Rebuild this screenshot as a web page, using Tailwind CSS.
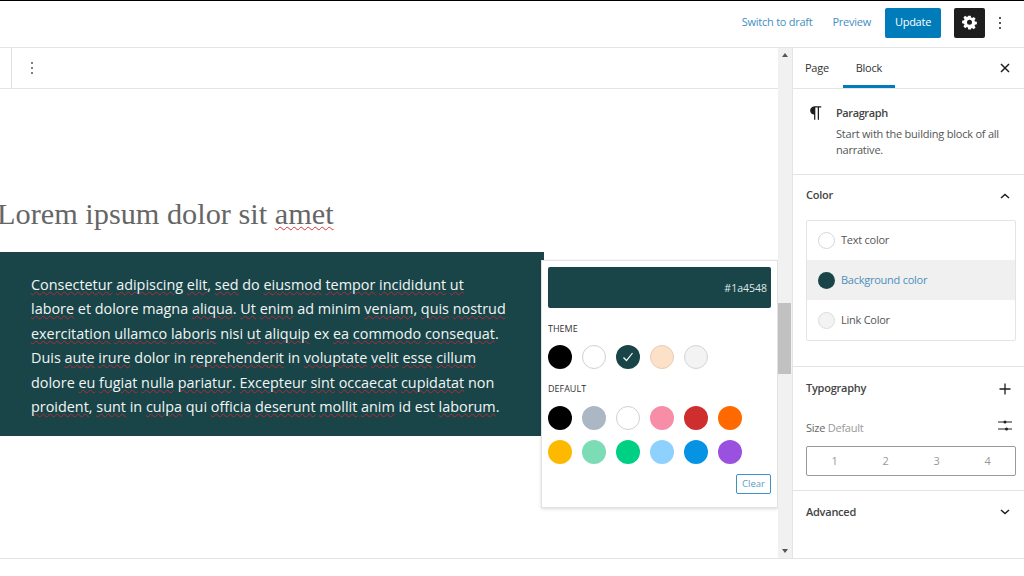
<!DOCTYPE html>
<html lang="en">
<head>
<meta charset="utf-8">
<title>Edit page</title>
<script src="https://cdn.jsdelivr.net/npm/@tailwindcss/browser@4"></script>
</head>
<body class="w-[1024px] h-[576px] overflow-hidden bg-white font-['Open_Sans',sans-serif] text-[#1e1e1e]">

<!-- top bar -->
<header class="h-[48px] border-t-[1px] border-t-black border-b border-b-[#e4e4e4] flex items-center justify-end pb-[3px]">
    <a class="text-[11px] tracking-[-0.25px] text-[#3f8fbf] mr-[20px]">Switch to draft</a>
    <a class="text-[11px] tracking-[-0.25px] text-[#3f8fbf] mr-[14px]">Preview</a>
    <button class="w-[56px] h-[30px] rounded-[2px] bg-[#007cba] text-white text-[11px] tracking-[-0.25px] mr-[13px]">Update</button>
    <button class="w-[31px] h-[30px] rounded-[2px] bg-[#1e1e1e] flex items-center justify-center mr-[5px]">
        <svg width="15" height="15" viewBox="0 0 24 24" fill="white"><path fill-rule="evenodd" d="M10 2h4l.6 3.1 1.7.7 2.6-1.8 2.9 2.9-1.8 2.6.7 1.7 3.1.6v4l-3.1.6-.7 1.7 1.8 2.6-2.9 2.9-2.6-1.8-1.7.7L14 24h-4l-.6-3.1-1.7-.7-2.6 1.8-2.9-2.9 1.8-2.6-.7-1.7L.2 14v-4l3.1-.6.7-1.7L2.2 5.1 5.1 2.2l2.6 1.8 1.7-.7L10 2zm2 6.5a4 4 0 1 0 0 8 4 4 0 0 0 0-8z" transform="translate(0 -1)"/></svg>
    </button>
    <button class="w-[20px] h-[30px] flex items-center justify-center mr-[14px]">
        <svg width="4" height="14" viewBox="0 0 4 14" fill="#1e1e1e"><circle cx="2" cy="2" r="1"/><circle cx="2" cy="7" r="1"/><circle cx="2" cy="12" r="1"/></svg>
    </button>
</header>

<div class="flex h-[511px] border-b border-[#e4e4e4]">
    <!-- editor canvas -->
    <main class="w-[778px] relative">
        <div class="h-[41px] border-b border-[#e4e4e4] flex">
            <div class="w-[12px] border-r border-[#e0e0e0]"></div>
            <div class="w-[40px] flex items-center justify-center">
                <svg width="4" height="14" viewBox="0 0 4 14" fill="#555"><circle cx="2" cy="2" r="1"/><circle cx="2" cy="7" r="1"/><circle cx="2" cy="12" r="1"/></svg>
            </div>
        </div>

        <h1 class="mt-[104px] -ml-[3px] h-[59px] font-['Liberation_Serif',serif] text-[30.3px] leading-[42px] font-normal text-[#666]">Lorem ipsum dolor sit <span class="underline decoration-wavy decoration-[#d63638] decoration-1 underline-offset-2">amet</span></h1>

        <div class="w-[544px] h-[184px] bg-[#1a4548] pl-[31px] pt-[21px] text-[14.4px] leading-[24.4px] text-[#f1f5f5] whitespace-nowrap">
            <span class="underline decoration-wavy decoration-[#b02a3a] decoration-1 underline-offset-[1px]">Consectetur</span> <span class="underline decoration-wavy decoration-[#b02a3a] decoration-1 underline-offset-[1px]">adipiscing</span> <span class="underline decoration-wavy decoration-[#b02a3a] decoration-1 underline-offset-[1px]">elit</span>, <span class="underline decoration-wavy decoration-[#b02a3a] decoration-1 underline-offset-[1px]">sed</span> do <span class="underline decoration-wavy decoration-[#b02a3a] decoration-1 underline-offset-[1px]">eiusmod</span> <span class="underline decoration-wavy decoration-[#b02a3a] decoration-1 underline-offset-[1px]">tempor</span> <span class="underline decoration-wavy decoration-[#b02a3a] decoration-1 underline-offset-[1px]">incididunt</span> <span class="underline decoration-wavy decoration-[#b02a3a] decoration-1 underline-offset-[1px]">ut</span><br>
            <span class="underline decoration-wavy decoration-[#b02a3a] decoration-1 underline-offset-[1px]">labore</span> et dolore magna <span class="underline decoration-wavy decoration-[#b02a3a] decoration-1 underline-offset-[1px]">aliqua</span>. <span class="underline decoration-wavy decoration-[#b02a3a] decoration-1 underline-offset-[1px]">Ut</span> <span class="underline decoration-wavy decoration-[#b02a3a] decoration-1 underline-offset-[1px]">enim</span> ad minim <span class="underline decoration-wavy decoration-[#b02a3a] decoration-1 underline-offset-[1px]">veniam</span>, <span class="underline decoration-wavy decoration-[#b02a3a] decoration-1 underline-offset-[1px]">quis</span> <span class="underline decoration-wavy decoration-[#b02a3a] decoration-1 underline-offset-[1px]">nostrud</span><br>
            <span class="underline decoration-wavy decoration-[#b02a3a] decoration-1 underline-offset-[1px]">exercitation</span> <span class="underline decoration-wavy decoration-[#b02a3a] decoration-1 underline-offset-[1px]">ullamco</span> <span class="underline decoration-wavy decoration-[#b02a3a] decoration-1 underline-offset-[1px]">laboris</span> nisi <span class="underline decoration-wavy decoration-[#b02a3a] decoration-1 underline-offset-[1px]">ut</span> <span class="underline decoration-wavy decoration-[#b02a3a] decoration-1 underline-offset-[1px]">aliquip</span> ex <span class="underline decoration-wavy decoration-[#b02a3a] decoration-1 underline-offset-[1px]">ea</span> <span class="underline decoration-wavy decoration-[#b02a3a] decoration-1 underline-offset-[1px]">commodo</span> <span class="underline decoration-wavy decoration-[#b02a3a] decoration-1 underline-offset-[1px]">consequat</span>.<br>
            Duis <span class="underline decoration-wavy decoration-[#b02a3a] decoration-1 underline-offset-[1px]">aute</span> <span class="underline decoration-wavy decoration-[#b02a3a] decoration-1 underline-offset-[1px]">irure</span> dolor in <span class="underline decoration-wavy decoration-[#b02a3a] decoration-1 underline-offset-[1px]">reprehenderit</span> in <span class="underline decoration-wavy decoration-[#b02a3a] decoration-1 underline-offset-[1px]">voluptate</span> <span class="underline decoration-wavy decoration-[#b02a3a] decoration-1 underline-offset-[1px]">velit</span> <span class="underline decoration-wavy decoration-[#b02a3a] decoration-1 underline-offset-[1px]">esse</span> <span class="underline decoration-wavy decoration-[#b02a3a] decoration-1 underline-offset-[1px]">cillum</span><br>
            dolore <span class="underline decoration-wavy decoration-[#b02a3a] decoration-1 underline-offset-[1px]">eu</span> <span class="underline decoration-wavy decoration-[#b02a3a] decoration-1 underline-offset-[1px]">fugiat</span> <span class="underline decoration-wavy decoration-[#b02a3a] decoration-1 underline-offset-[1px]">nulla</span> <span class="underline decoration-wavy decoration-[#b02a3a] decoration-1 underline-offset-[1px]">pariatur</span>. <span class="underline decoration-wavy decoration-[#b02a3a] decoration-1 underline-offset-[1px]">Excepteur</span> <span class="underline decoration-wavy decoration-[#b02a3a] decoration-1 underline-offset-[1px]">sint</span> <span class="underline decoration-wavy decoration-[#b02a3a] decoration-1 underline-offset-[1px]">occaecat</span> <span class="underline decoration-wavy decoration-[#b02a3a] decoration-1 underline-offset-[1px]">cupidatat</span> non<br>
            <span class="underline decoration-wavy decoration-[#b02a3a] decoration-1 underline-offset-[1px]">proident</span>, <span class="underline decoration-wavy decoration-[#b02a3a] decoration-1 underline-offset-[1px]">sunt</span> in <span class="underline decoration-wavy decoration-[#b02a3a] decoration-1 underline-offset-[1px]">culpa</span> qui <span class="underline decoration-wavy decoration-[#b02a3a] decoration-1 underline-offset-[1px]">officia</span> <span class="underline decoration-wavy decoration-[#b02a3a] decoration-1 underline-offset-[1px]">deserunt</span> <span class="underline decoration-wavy decoration-[#b02a3a] decoration-1 underline-offset-[1px]">mollit</span> <span class="underline decoration-wavy decoration-[#b02a3a] decoration-1 underline-offset-[1px]">anim</span> id est <span class="underline decoration-wavy decoration-[#b02a3a] decoration-1 underline-offset-[1px]">laborum</span>.
        </div>

        <!-- colour popover -->
        <div class="absolute left-[541px] top-[212px] w-[237px] h-[248px] bg-white border border-[#e2e2e2] shadow-[0_1px_3px_rgba(0,0,0,0.15)] p-[6px]">
            <div class="h-[41px] rounded-[2px] bg-[#1a4548] flex items-center justify-end pr-[4px] pt-[2px] text-[10.5px] text-[#dfe8e8]">#1a4548</div>
            <p class="mt-[15px] text-[9px] leading-[12px] text-[#333]">THEME</p>
            <div class="mt-[10px] flex gap-[10px]">
                <span class="w-[24px] h-[24px] rounded-full bg-black"></span>
                <span class="w-[24px] h-[24px] rounded-full bg-white border border-[#d0d0d0]"></span>
                <span class="w-[24px] h-[24px] rounded-full bg-[#1a4548] flex items-center justify-center">
                    <svg width="14" height="14" viewBox="0 0 14 14" fill="none" stroke="white" stroke-width="1.2"><path d="M2.5 7.5 5.5 10.5 11.5 3"/></svg>
                </span>
                <span class="w-[24px] h-[24px] rounded-full bg-[#fde0c8] border border-[#e6ccb6]"></span>
                <span class="w-[24px] h-[24px] rounded-full bg-[#f3f3f3] border border-[#d4d4d4]"></span>
            </div>
            <p class="mt-[14px] text-[9px] leading-[12px] text-[#333]">DEFAULT</p>
            <div class="mt-[11px] grid grid-cols-[repeat(6,24px)] gap-[10px]">
                <span class="h-[24px] rounded-full bg-black"></span>
                <span class="h-[24px] rounded-full bg-[#abb8c3]"></span>
                <span class="h-[24px] rounded-full bg-white border border-[#d0d0d0]"></span>
                <span class="h-[24px] rounded-full bg-[#f78da7]"></span>
                <span class="h-[24px] rounded-full bg-[#cf2e2e]"></span>
                <span class="h-[24px] rounded-full bg-[#ff6900]"></span>
                <span class="h-[24px] rounded-full bg-[#fcb900]"></span>
                <span class="h-[24px] rounded-full bg-[#7bdcb5]"></span>
                <span class="h-[24px] rounded-full bg-[#00d084]"></span>
                <span class="h-[24px] rounded-full bg-[#8ed1fc]"></span>
                <span class="h-[24px] rounded-full bg-[#0693e3]"></span>
                <span class="h-[24px] rounded-full bg-[#9b51e0]"></span>
            </div>
            <div class="mt-[10px] flex justify-end">
                <button class="w-[35px] h-[20px] border border-[#3f93c4] rounded-[2px] text-[9.5px] leading-none text-[#5a9dc6]">Clear</button>
            </div>
        </div>
    </main>

    <!-- scrollbar -->
    <div class="w-[14px] bg-[#f1f1f1] flex flex-col items-center justify-between py-[5px] relative">
        <span class="w-0 h-0 border-x-[3.5px] border-x-transparent border-b-[4px] border-b-[#555]"></span>
        <span class="absolute left-0 top-[255px] w-[13px] h-[71px] bg-[#c1c1c1]"></span>
        <span class="w-0 h-0 border-x-[3.5px] border-x-transparent border-t-[4px] border-t-[#555]"></span>
    </div>

    <!-- settings sidebar -->
    <aside class="w-[232px] border-l border-[#e4e4e4] text-[11px] tracking-[-0.25px]">
        <div class="h-[41px] border-b border-[#e4e4e4] flex items-stretch relative">
            <span class="ml-[12px] leading-[40px] text-[#333]">Page</span>
            <span class="ml-[14px] w-[52px] text-center leading-[40px] text-[#333] border-b-[3px] border-[#007cba] h-[40px]">Block</span>
            <svg class="absolute right-[14px] top-[15px]" width="10" height="10" viewBox="0 0 10 10" stroke="#1e1e1e" stroke-width="1.5"><path d="M1 1 9 9M9 1 1 9"/></svg>
        </div>

        <section class="h-[86px] border-b border-[#e4e4e4] flex pl-[13px] pt-[14px]">
            <svg class="shrink-0 mr-[10px]" width="20" height="20" viewBox="0 0 24 24" fill="#1e1e1e"><path d="M18.3 4H9.9v-.1l-.9.2c-2.3.4-4 2.4-4 4.8s1.7 4.4 4 4.8l.7.1V20h1.5V5.5h2.9V20h1.5V5.5h2.7V4z"/></svg>
            <div>
                <p class="font-semibold text-[#444] leading-[20px] tracking-[-0.4px]">Paragraph</p>
                <p class="mt-[3px] leading-[15.5px] tracking-[-0.22px] text-[#555]">Start with the building block of all<br>narrative.</p>
            </div>
        </section>

        <section class="h-[192px] border-b border-[#e4e4e4] pl-[13px] pr-[8px]">
            <div class="h-[41px] mb-[4px] flex items-center justify-between pr-[6px]">
                <span class="font-semibold text-[#444]">Color</span>
                <svg width="10" height="6" viewBox="0 0 10 6" fill="none" stroke="#1e1e1e" stroke-width="1.5"><path d="M1 5 5 1.5 9 5"/></svg>
            </div>
            <div class="h-[121px] border border-[#e4e4e4] rounded-[2px]">
                <div class="h-[39px] flex items-center pl-[11px] gap-[6px] text-[#555]">
                    <span class="w-[17px] h-[17px] rounded-full bg-white border border-[#d6d6d6]"></span>Text color
                </div>
                <div class="h-[40px] flex items-center pl-[11px] gap-[6px] bg-[#f0f0f0] text-[#4d8fbc]">
                    <span class="w-[17px] h-[17px] rounded-full bg-[#1a4548]"></span>Background color
                </div>
                <div class="h-[40px] flex items-center pl-[11px] gap-[6px] text-[#555]">
                    <span class="w-[17px] h-[17px] rounded-full bg-[#f3f3f3] border border-[#dcdcdc]"></span>Link Color
                </div>
            </div>
        </section>

        <section class="h-[124px] border-b border-[#e4e4e4] pl-[13px] pr-[8px]">
            <div class="h-[43px] flex items-center justify-between pr-[5px]">
                <span class="font-semibold text-[#444]">Typography</span>
                <svg width="12" height="12" viewBox="0 0 12 12" stroke="#1e1e1e" stroke-width="1.3"><path d="M6 .5v11M.5 6h11"/></svg>
            </div>
            <div class="h-[36px] flex items-center justify-between pr-[4px]">
                <span class="text-[#666]">Size <span class="text-[#999]">Default</span></span>
                <svg class="mb-[5px]" width="14" height="11" viewBox="0 0 14 11" fill="#1e1e1e" stroke="#1e1e1e"><path d="M0 2h14M0 9h14" stroke-width="1"/><circle cx="7" cy="2" r="1.5" stroke="none"/><circle cx="8.5" cy="9" r="1.5" stroke="none"/></svg>
            </div>
            <div class="h-[30px] border border-[#9a9a9a] rounded-[2px] grid grid-cols-4 items-center text-center text-[#999] text-[11px] px-[2px]">
                <span>1</span><span>2</span><span>3</span><span>4</span>
            </div>
        </section>

        <section class="h-[42px] pl-[13px] pr-[14px] flex items-center justify-between">
            <span class="font-semibold text-[#444]">Advanced</span>
            <svg width="10" height="6" viewBox="0 0 10 6" fill="none" stroke="#1e1e1e" stroke-width="1.5"><path d="M1 1 5 4.5 9 1"/></svg>
        </section>
    </aside>
</div>

</body>
</html>
